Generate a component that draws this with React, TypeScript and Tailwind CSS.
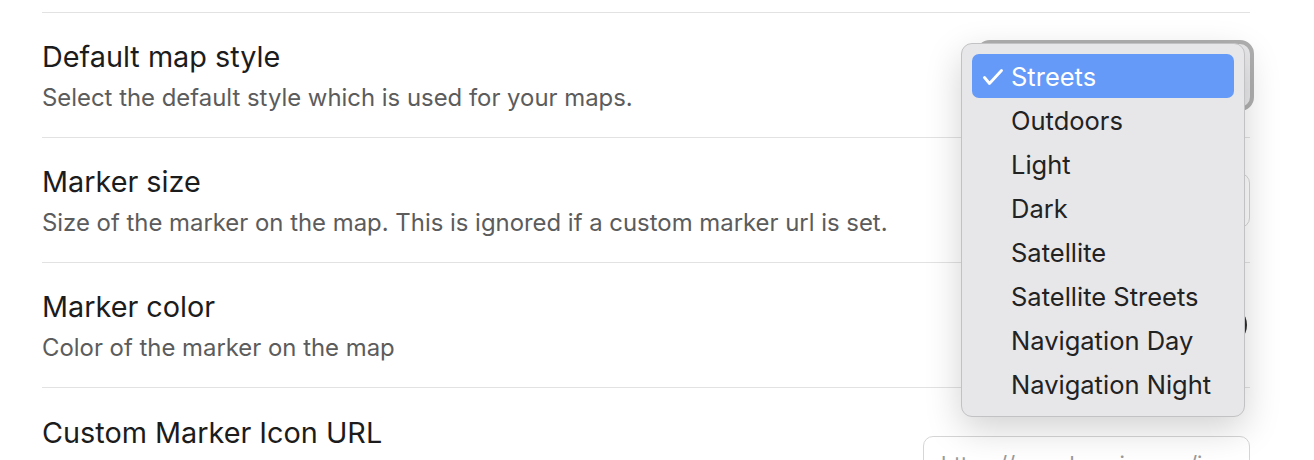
import React from 'react';

const styles = [
  'Streets',
  'Outdoors',
  'Light',
  'Dark',
  'Satellite',
  'Satellite Streets',
  'Navigation Day',
  'Navigation Night',
];

const Row: React.FC<{ title: string; desc?: string; children?: React.ReactNode }> = ({
  title,
  desc,
  children,
}) => (
  <div className="border-t border-[#e2e2e2] h-[125px] flex justify-between">
    <div className="pt-[27px]">
      <div className="text-[28.8px] leading-[34px] text-[#1c1c1c]">{title}</div>
      {desc && <div className="mt-[9px] text-[23.9px] leading-[30px] text-[#5c5c5c]">{desc}</div>}
    </div>
    {children}
  </div>
);

const App: React.FC = () => {
  return (
    <div
      className="relative w-[1314px] h-[460px] overflow-hidden bg-white"
      style={{ fontFamily: 'Inter, "Noto Sans", "Liberation Sans", sans-serif' }}
    >
      <div className="ml-[42px] w-[1208px] pt-[12px]">
        <Row title="Default map style" desc="Select the default style which is used for your maps.">
          <div className="self-center mr-[-4px] w-[278px] h-[71px] rounded-[14px] border-[4px] border-[#b0b0b0] bg-[#e9e9eb]" />
        </Row>
        <Row title="Marker size" desc="Size of the marker on the map. This is ignored if a custom marker url is set.">
          <div className="self-center w-[270px] h-[55px] rounded-[10px] border border-[#d6d6d6] bg-white" />
        </Row>
        <Row title="Marker color" desc="Color of the marker on the map">
          <div className="self-center mr-[3px] w-[40px] h-[40px] rounded-full bg-[#2e2e2e]" />
        </Row>
        <div className="border-t border-[#e2e2e2] h-[125px] flex justify-between">
          <div className="pt-[28px]">
            <div className="text-[28.8px] leading-[34px] text-[#1c1c1c]">Custom Marker Icon URL</div>
          </div>
          <div className="mt-[48px] w-[327px] h-[55px] rounded-[10px] border border-[#d6d6d6] bg-white px-[17px] pt-[14px] text-[22px] leading-[26px] text-[#9a9a9a] overflow-hidden whitespace-nowrap">
            https://yourdomain.com/icon.png
          </div>
        </div>
      </div>

      {/* open select menu */}
      <div className="absolute left-[961px] top-[43px] w-[284px] rounded-[11px] border border-[#c2c2c4] bg-[#e7e7ea] p-[10px] shadow-[0_12px_36px_rgba(0,0,0,0.18)]">
        {styles.map((s, i) => (
          <div
            key={s}
            className={
              i === 0
                ? 'flex items-center h-[44px] pt-[2px] rounded-[7px] bg-[#659af8] text-white text-[25.5px]'
                : 'flex items-center h-[44px] pt-[2px] rounded-[7px] text-[#222222] text-[25.5px]'
            }
          >
            <span className="w-[39px] pl-[11px] flex items-center">
              {i === 0 && (
                <svg width="20" height="16" viewBox="0 0 20 16" fill="none">
                  <path d="M1.5 8.5 L6.5 14.5 L18.5 1.5" stroke="white" strokeWidth="2.8" strokeLinecap="round" strokeLinejoin="round" />
                </svg>
              )}
            </span>
            <span>{s}</span>
          </div>
        ))}
      </div>
    </div>
  );
};

export default App;
